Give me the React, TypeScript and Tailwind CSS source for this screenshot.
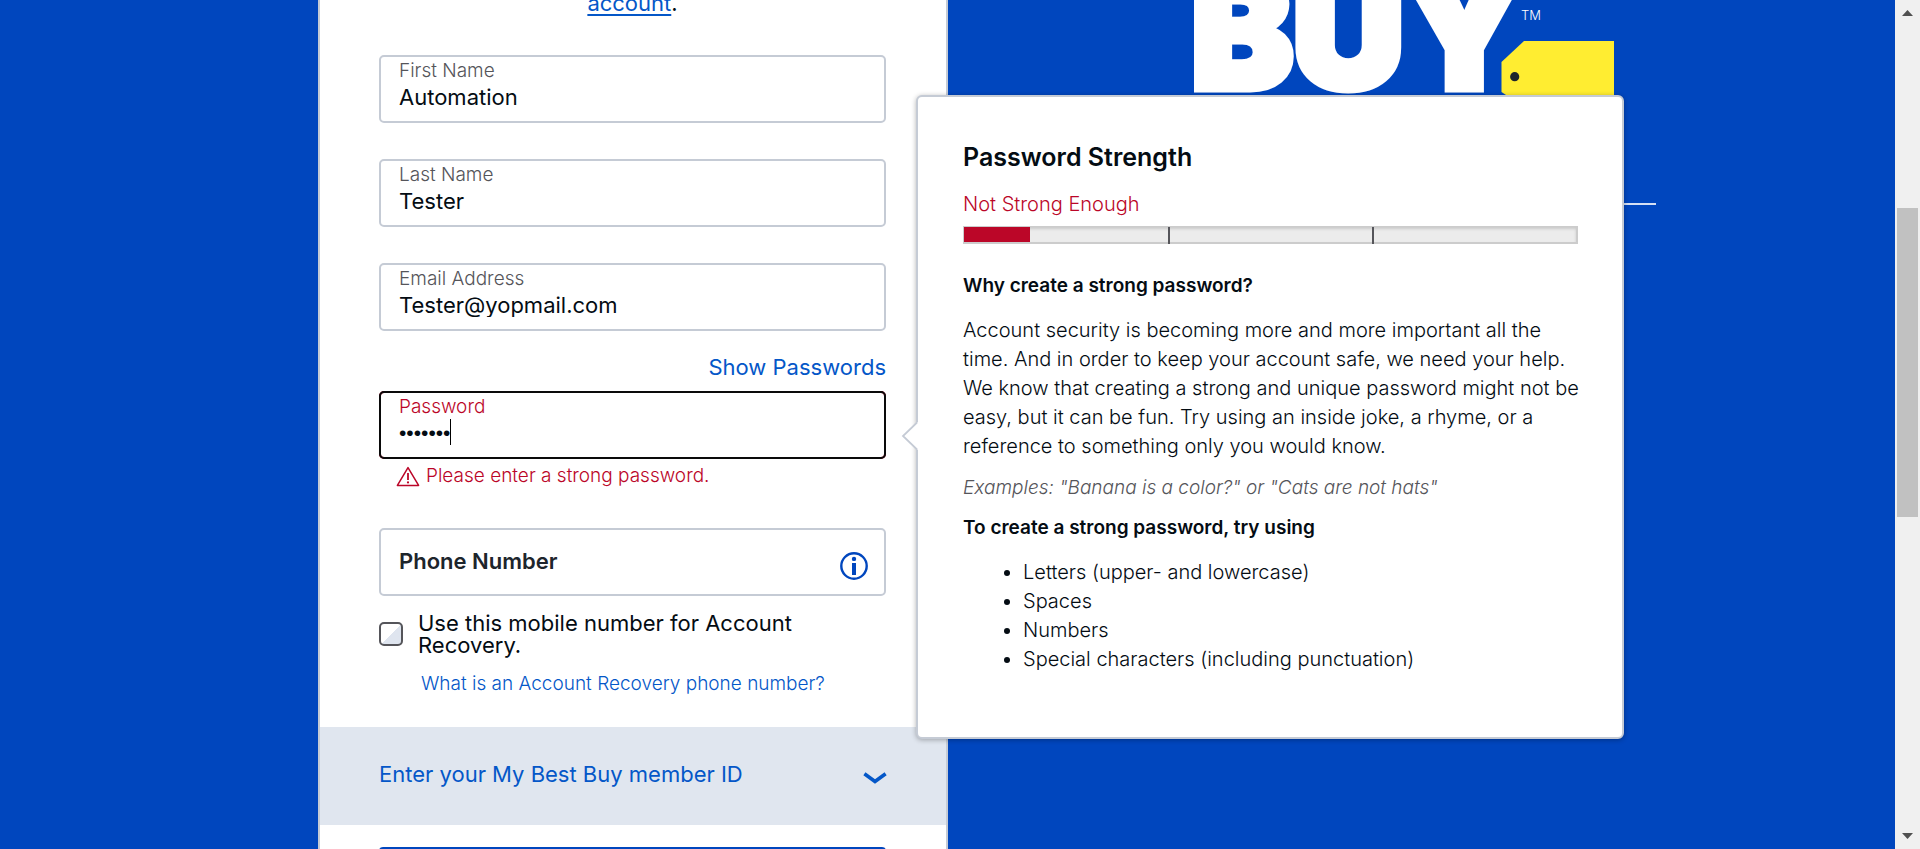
import { useId, useState } from 'react';

function TextField({ label, value, type = 'text' }: { label: string; value: string; type?: string }) {
  const id = useId();
  const [text, setText] = useState(value);
  return (
    <div className="flex h-[68px] flex-col rounded-[5px] border-2 border-[#c5cbd5] bg-white px-[18px]">
      <label htmlFor={id} className="text-[19px] leading-7 font-light text-[#55555a]">
        {label}
      </label>
      <input
        id={id}
        type={type}
        value={text}
        onChange={(e) => setText(e.target.value)}
        className="h-6 w-full bg-transparent text-[22px] leading-6 text-[#040c13] outline-none"
      />
    </div>
  );
}

function WarningIcon() {
  return (
    <svg viewBox="0 0 24 21" className="h-[21px] w-6 shrink-0" fill="none" stroke="#bb0628" strokeWidth="1.5">
      <path d="M12 1.6 22.6 19.4H1.4Z" strokeLinejoin="round" />
      <path d="M12 7v7" strokeWidth="1.8" />
      <circle cx="12" cy="16.4" r="1.1" fill="#bb0628" stroke="none" />
    </svg>
  );
}

function InfoIcon() {
  return (
    <svg viewBox="0 0 28 28" className="size-7" fill="none">
      <circle cx="14" cy="14" r="12.7" stroke="#0046be" strokeWidth="2.4" />
      <circle cx="14" cy="6.9" r="2.2" fill="#0046be" />
      <path d="M12 11h4v12h-4z" fill="#0046be" />
    </svg>
  );
}

function StrengthTip() {
  return (
    <aside className="absolute -top-[296px] left-full z-10 ml-[30px] w-[708px] rounded-md border-2 border-[#c5cbd5] bg-white pt-11 pr-11 pb-[63px] pl-[45px] text-xl leading-[29px] font-light text-[#040c13] shadow-[0_1px_5px_rgba(0,0,0,0.3)]">
      <svg viewBox="0 0 18 28" className="absolute top-[325px] -left-[17px] h-7 w-[18px]">
        <path d="M17 0 2 14l15 14h1V0z" fill="#fff" />
        <path d="M16 .5 2 14l14 13.5" fill="none" stroke="#c5cbd5" strokeWidth="1.8" />
      </svg>
      <h2 className="text-[25px] leading-8 font-semibold">Password Strength</h2>
      <p className="mt-[19px] leading-6 text-[#bb0628]">Not Strong Enough</p>
      <div className="relative mt-2.5 h-[18px] border-t border-r-2 border-b-2 border-l border-[#ccc] bg-[#ececec] shadow-[inset_0_2px_3px_rgba(0,0,0,0.15)]">
        <div className="h-full w-[66px] bg-[#bb0628]" />
        <div className="absolute top-0 -bottom-0.5 left-1/3 w-0.5 bg-[#55555a]" />
        <div className="absolute top-0 -bottom-0.5 left-2/3 w-0.5 bg-[#55555a]" />
      </div>
      <h3 className="mt-7 text-[19px] leading-7 font-semibold">Why create a strong password?</h3>
      <p className="mt-4 -mr-2">
        Account security is becoming more and more important all the time. And in order to keep your account safe, we
        need your help. We know that creating a strong and unique password might not be easy, but it can be fun. Try
        using an inside joke, a rhyme, or a reference to something only you would know.
      </p>
      <p className="mt-3 text-[19px] text-[#55555a] italic">Examples: "Banana is a color?" or "Cats are not hats"</p>
      <h3 className="mt-3 text-[19px] leading-7 font-semibold">To create a strong password, try using</h3>
      <ul className="mt-4 list-disc pl-[60px]">
        <li>Letters (upper- and lowercase)</li>
        <li>Spaces</li>
        <li>Numbers</li>
        <li>Special characters (including punctuation)</li>
      </ul>
    </aside>
  );
}

function PasswordField() {
  const [password, setPassword] = useState('banana1');
  return (
    <div className="relative">
      <div className="relative flex h-[68px] flex-col rounded-[5px] border-2 border-[#bb0628] bg-white px-[18px] outline-2 -outline-offset-2 outline-[#0a0a0a]">
        <label htmlFor="password" className="text-[19px] leading-7 font-light text-[#bb0628]">
          Password
        </label>
        <input
          id="password"
          type="password"
          value={password}
          onChange={(e) => setPassword(e.target.value)}
          aria-describedby="password-error"
          className="h-6 w-full bg-transparent font-['Liberation_Sans',sans-serif] text-[21px] leading-6 text-[#040c13] outline-none"
        />
        <span className="absolute top-[26px] left-[69px] h-[26px] w-px bg-black" />
      </div>
      <StrengthTip />
    </div>
  );
}

function Logo() {
  return (
    <svg viewBox="0 0 420 120" className="h-[120px] w-[420px]" role="img" aria-label="Best Buy">
      <text
        x="-4"
        y="88"
        fill="#fff"
        stroke="#fff"
        strokeWidth="9"
        className="font-['Inter',sans-serif] text-[154px] font-black"
      >
        BUY
      </text>
      <text x="327" y="20" fill="#fff" className="font-['Inter',sans-serif] text-[13px] font-light">
        TM
      </text>
      <path d="M330 41h90v79h-70l-42.500-28V62z" fill="#ffed31" />
      <circle cx="320.700" cy="76.700" r="4.600" fill="#1d252c" />
    </svg>
  );
}

function Scrollbar() {
  return (
    <div aria-hidden="true" className="flex w-[25px] shrink-0 flex-col items-center bg-[#f0f0f0] py-2.5">
      <svg viewBox="0 0 11 6" className="h-1.5 w-[11px]">
        <path d="M0 6 5.500 0 11 6z" fill="#505050" />
      </svg>
      <div className="flex w-full flex-1 flex-col items-center">
        <div className="mt-[192px] h-[309px] w-[21px] bg-[#c1c1c1]" />
      </div>
      <svg viewBox="0 0 11 6" className="h-1.5 w-[11px]">
        <path d="M0 0h11L5.500 6z" fill="#505050" />
      </svg>
    </div>
  );
}

export default function App() {
  return (
    <div className="flex h-screen overflow-hidden bg-[#0046be] font-['Inter','Liberation_Sans',sans-serif] text-[22px] text-[#040c13]">
      <main className="flex min-w-0 flex-1 justify-center gap-[204px] overflow-hidden pl-[79px]">
        <section className="w-[630px] shrink-0 border-x-2 border-[#c5cbd5] bg-white">
          <form className="flex flex-col pr-[60px] pl-[59px]" onSubmit={(e) => e.preventDefault()}>
            <p className="-mt-[13px] text-center leading-8">
              <a href="#" className="text-[#0457c8] underline decoration-2 underline-offset-3">
                account
              </a>
              .
            </p>
            <div className="mt-9 flex flex-col gap-9">
              <TextField label="First Name" value="Automation" />
              <TextField label="Last Name" value="Tester" />
              <TextField label="Email Address" value="Tester@yopmail.com" type="email" />
            </div>
            <button type="button" className="mt-6 self-end leading-6 text-[#0457c8]">
              Show Passwords
            </button>
            <div className="mt-3">
              <PasswordField />
            </div>
            <p id="password-error" className="mt-[5px] flex items-center gap-1.5 pl-[17px] text-[19px] leading-6 font-light text-[#bb0628]">
              <WarningIcon />
              Please enter a strong password.
            </p>
            <div className="mt-10 flex h-[68px] items-center rounded-[5px] border-2 border-[#c5cbd5] pr-4 pl-[18px]">
              <label htmlFor="phone" className="pb-0.5 font-semibold text-[#1d252c]">
                Phone Number
              </label>
              <input id="phone" type="tel" className="min-w-0 flex-1 bg-transparent outline-none" />
              <button type="button" aria-label="Phone number information" className="pt-2">
                <InfoIcon />
              </button>
            </div>
            <div className="mt-4 flex items-start gap-[15px]">
              <input
                id="recovery"
                type="checkbox"
                className="mt-2.5 size-6 shrink-0 appearance-none rounded-[5px] border-2 border-[#55555a] bg-linear-to-br from-white from-50% to-[#dfe5ef] to-50%"
              />
              <label htmlFor="recovery" className="leading-[22px]">
                Use this mobile number for Account Recovery.
              </label>
            </div>
            <a href="#" className="mt-4 ml-[42px] text-[19px] leading-6 font-light text-[#0457c8]">
              What is an Account Recovery phone number?
            </a>
          </form>
          <button
            type="button"
            className="mt-[31px] flex h-[98px] w-full items-center justify-between bg-[#e0e6ef] px-[59px] pb-1 text-[#0457c8]"
          >
            Enter your My Best Buy member ID
            <svg viewBox="0 0 24 12" className="mt-2 h-3 w-6" fill="none" stroke="#0457c8" strokeWidth="3.600">
              <path d="m1.400 1.700 10.600 7.800 10.600-7.800" />
            </svg>
          </button>
          <div className="pt-[22px] pr-[60px] pl-[59px]">
            <button type="submit" aria-label="Continue" className="block h-14 w-full rounded bg-[#0046be]" />
          </div>
        </section>
        <section className="flex w-[504px] shrink-0 flex-col items-center">
          <Logo />
          <hr className="mt-[83px] w-full border-t-2 border-[#d5e0f4]" />
        </section>
      </main>
      <Scrollbar />
    </div>
  );
}
